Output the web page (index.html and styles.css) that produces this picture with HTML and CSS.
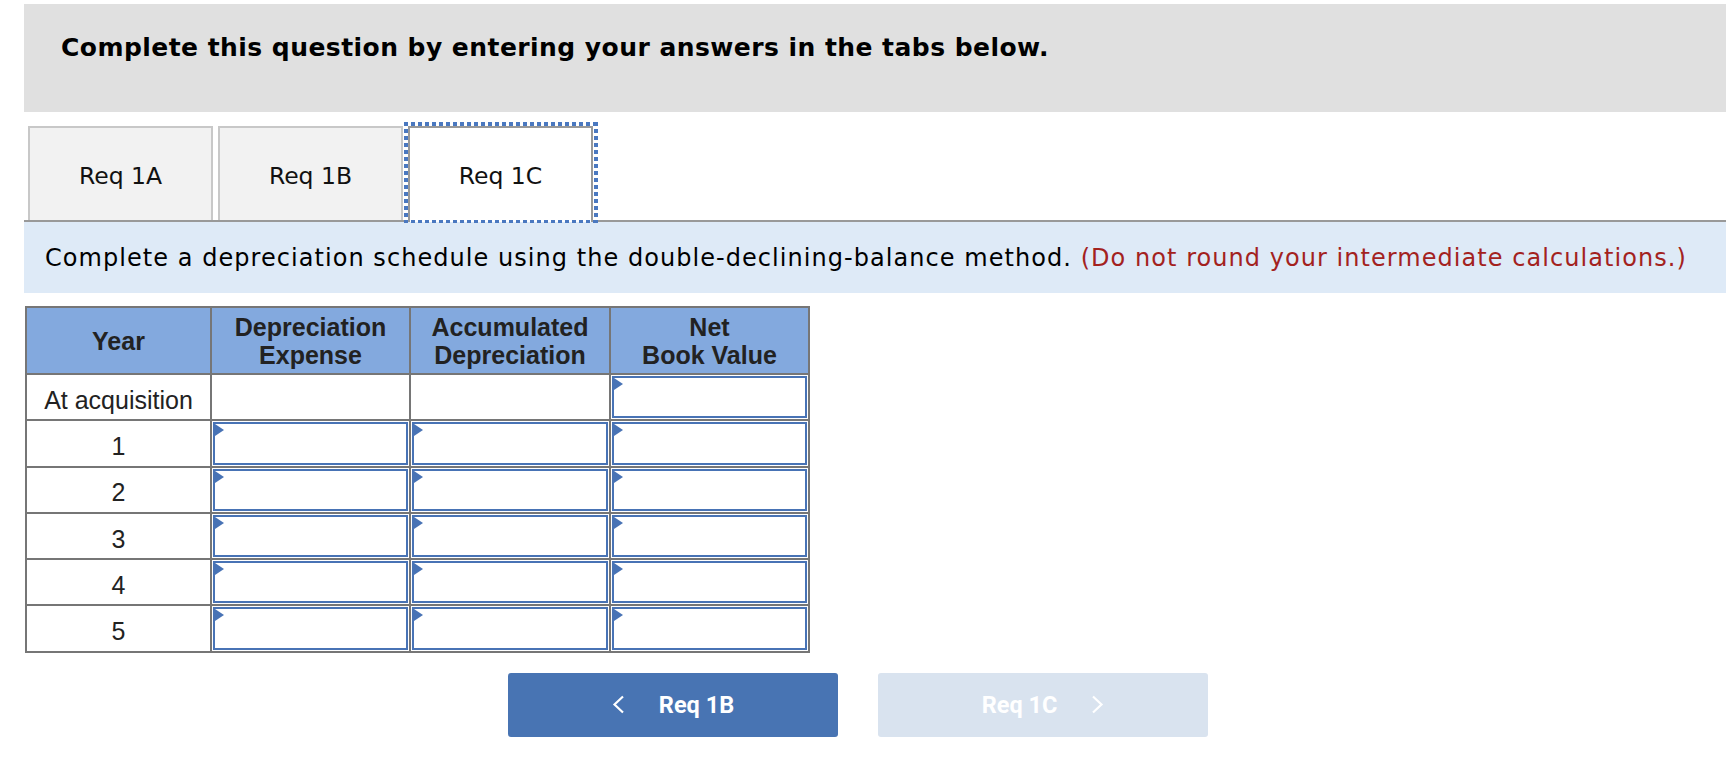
FILE: index.html
```html
<!DOCTYPE html>
<html lang="en">
<head>
<meta charset="utf-8">
<title>Depreciation schedule</title>
<link rel="stylesheet" href="styles.css">
</head>
<body>
<div class="page">
  <div class="banner">
    <h1 class="banner-title">Complete this question by entering your answers in the tabs below.</h1>
  </div>

  <div class="tabs">
    <div class="tab">Req 1A</div>
    <div class="tab">Req 1B</div>
    <div class="tab tab-active">Req 1C</div>
  </div>

  <div class="prompt">Complete a depreciation schedule using the double-declining-balance method. <span class="note">(Do not round your intermediate calculations.)</span></div>

  <table class="schedule">
    <colgroup>
      <col class="col-year">
      <col class="col-exp">
      <col class="col-acc">
      <col class="col-nbv">
    </colgroup>
    <thead>
      <tr>
        <th>Year</th>
        <th>Depreciation<br>Expense</th>
        <th>Accumulated<br>Depreciation</th>
        <th>Net<br>Book Value</th>
      </tr>
    </thead>
    <tbody>
      <tr>
        <td class="year">At acquisition</td>
        <td class="blank"></td>
        <td class="blank"></td>
        <td class="entry"><div class="field"></div></td>
      </tr>
      <tr>
        <td class="year">1</td>
        <td class="entry"><div class="field"></div></td>
        <td class="entry"><div class="field"></div></td>
        <td class="entry"><div class="field"></div></td>
      </tr>
      <tr>
        <td class="year">2</td>
        <td class="entry"><div class="field"></div></td>
        <td class="entry"><div class="field"></div></td>
        <td class="entry"><div class="field"></div></td>
      </tr>
      <tr>
        <td class="year">3</td>
        <td class="entry"><div class="field"></div></td>
        <td class="entry"><div class="field"></div></td>
        <td class="entry"><div class="field"></div></td>
      </tr>
      <tr>
        <td class="year">4</td>
        <td class="entry"><div class="field"></div></td>
        <td class="entry"><div class="field"></div></td>
        <td class="entry"><div class="field"></div></td>
      </tr>
      <tr>
        <td class="year">5</td>
        <td class="entry"><div class="field"></div></td>
        <td class="entry"><div class="field"></div></td>
        <td class="entry"><div class="field"></div></td>
      </tr>
    </tbody>
  </table>

  <div class="nav">
    <button class="nav-btn nav-prev" type="button">
      <svg class="chev" width="13" height="19" viewBox="0 0 13 19"><polyline points="11,1.5 2.5,9.5 11,17.5" fill="none" stroke="#fff" stroke-width="2.2"/></svg>
      <span>Req 1B</span>
    </button>
    <button class="nav-btn nav-next" type="button">
      <span>Req 1C</span>
      <svg class="chev" width="13" height="19" viewBox="0 0 13 19"><polyline points="2,1.5 10.5,9.5 2,17.5" fill="none" stroke="#fff" stroke-width="2.2"/></svg>
    </button>
  </div>
</div>
</body>
</html>
```

FILE: styles.css
```css
html, body {
  margin: 0;
  padding: 0;
  background: #ffffff;
}

.page {
  padding: 4px 6px 0 24px;
}

.banner {
  background: #e0e0e0;
  height: 108px;
  box-sizing: border-box;
  padding: 29px 0 0 37px;
}

.banner-title {
  margin: 0;
  font-family: "DejaVu Sans", Verdana, sans-serif;
  font-weight: bold;
  font-size: 25px;
  line-height: 30px;
  letter-spacing: 0.45px;
  color: #000;
}

.tabs {
  display: flex;
  align-items: flex-end;
  gap: 5px;
  margin-top: 14px;
  padding-left: 4px;
  border-bottom: 2px solid #999999;
}

.tab {
  width: 185px;
  height: 94px;
  box-sizing: border-box;
  border: 2px solid #c8c8c8;
  border-bottom: none;
  background: #f2f2f2;
  display: flex;
  align-items: center;
  justify-content: center;
  padding-top: 3px;
  font-family: "DejaVu Sans", Verdana, sans-serif;
  font-size: 23.5px;
  color: #111;
}

.tab-active {
  position: relative;
  height: 96px;
  margin-bottom: -2px;
  padding-bottom: 2px;
  background: #ffffff;
  border-color: #999999;
}

.tab-active::after {
  content: "";
  position: absolute;
  top: -6px;
  left: -6px;
  right: -7px;
  bottom: -1px;
  pointer-events: none;
  background:
    repeating-linear-gradient(90deg, #4a78c0 0 4px, transparent 4px 7px) left top / 100% 4px no-repeat,
    repeating-linear-gradient(90deg, #4a78c0 0 4px, transparent 4px 7px) left bottom / 100% 3px no-repeat,
    repeating-linear-gradient(180deg, #4a78c0 0 4px, transparent 4px 7px) left top / 4px 100% no-repeat,
    repeating-linear-gradient(180deg, #4a78c0 0 4px, transparent 4px 7px) right top / 4px 100% no-repeat;
}

.prompt {
  background: #deeaf7;
  height: 71px;
  box-sizing: border-box;
  padding: 21px 0 0 21px;
  font-family: "DejaVu Sans", Verdana, sans-serif;
  font-size: 24px;
  line-height: 30px;
  letter-spacing: 1.05px;
  color: #000;
  white-space: nowrap;
}

.note {
  color: #a3221e;
}

.schedule {
  margin-top: 13px;
  margin-left: 1px;
  border-collapse: collapse;
  table-layout: fixed;
  width: 785px;
  font-family: "Liberation Sans", Arial, sans-serif;
  font-size: 25px;
  color: #222;
}

.col-year { width: 185px; }
.col-exp { width: 199px; }
.col-acc { width: 200px; }
.col-nbv { width: 199px; }

.schedule th,
.schedule td {
  border: 2px solid #767676;
  padding: 0;
  text-align: center;
  vertical-align: middle;
}

.schedule th {
  background: #83a9de;
  font-weight: bold;
  line-height: 28px;
  height: 65px;
}

.schedule td {
  background: #ffffff;
}

.schedule td.year {
  padding-top: 6px;
}

.schedule td.entry {
  padding: 1px;
}

.field {
  position: relative;
  height: 42.3px;
  box-sizing: border-box;
  border: 2px solid #4873b5;
  background: #ffffff;
}

.field::before {
  content: "";
  position: absolute;
  left: 0;
  top: 0;
  width: 0;
  height: 0;
  border-left: 9px solid #4873b5;
  border-top: 6px solid transparent;
  border-bottom: 6px solid transparent;
}

.nav {
  display: flex;
  gap: 40px;
  margin-top: 20px;
  padding-left: 484px;
}

.nav-btn {
  width: 330px;
  height: 64px;
  border: none;
  border-radius: 3px;
  display: flex;
  align-items: center;
  justify-content: center;
  gap: 34px;
  padding: 0;
  font-family: Roboto, "Liberation Sans", sans-serif;
  font-weight: bold;
  font-size: 23.5px;
  color: #ffffff;
}

.nav-prev {
  background: #4874b3;
}

.nav-next {
  background: #d9e3ef;
}

.chev {
  display: block;
}
```
